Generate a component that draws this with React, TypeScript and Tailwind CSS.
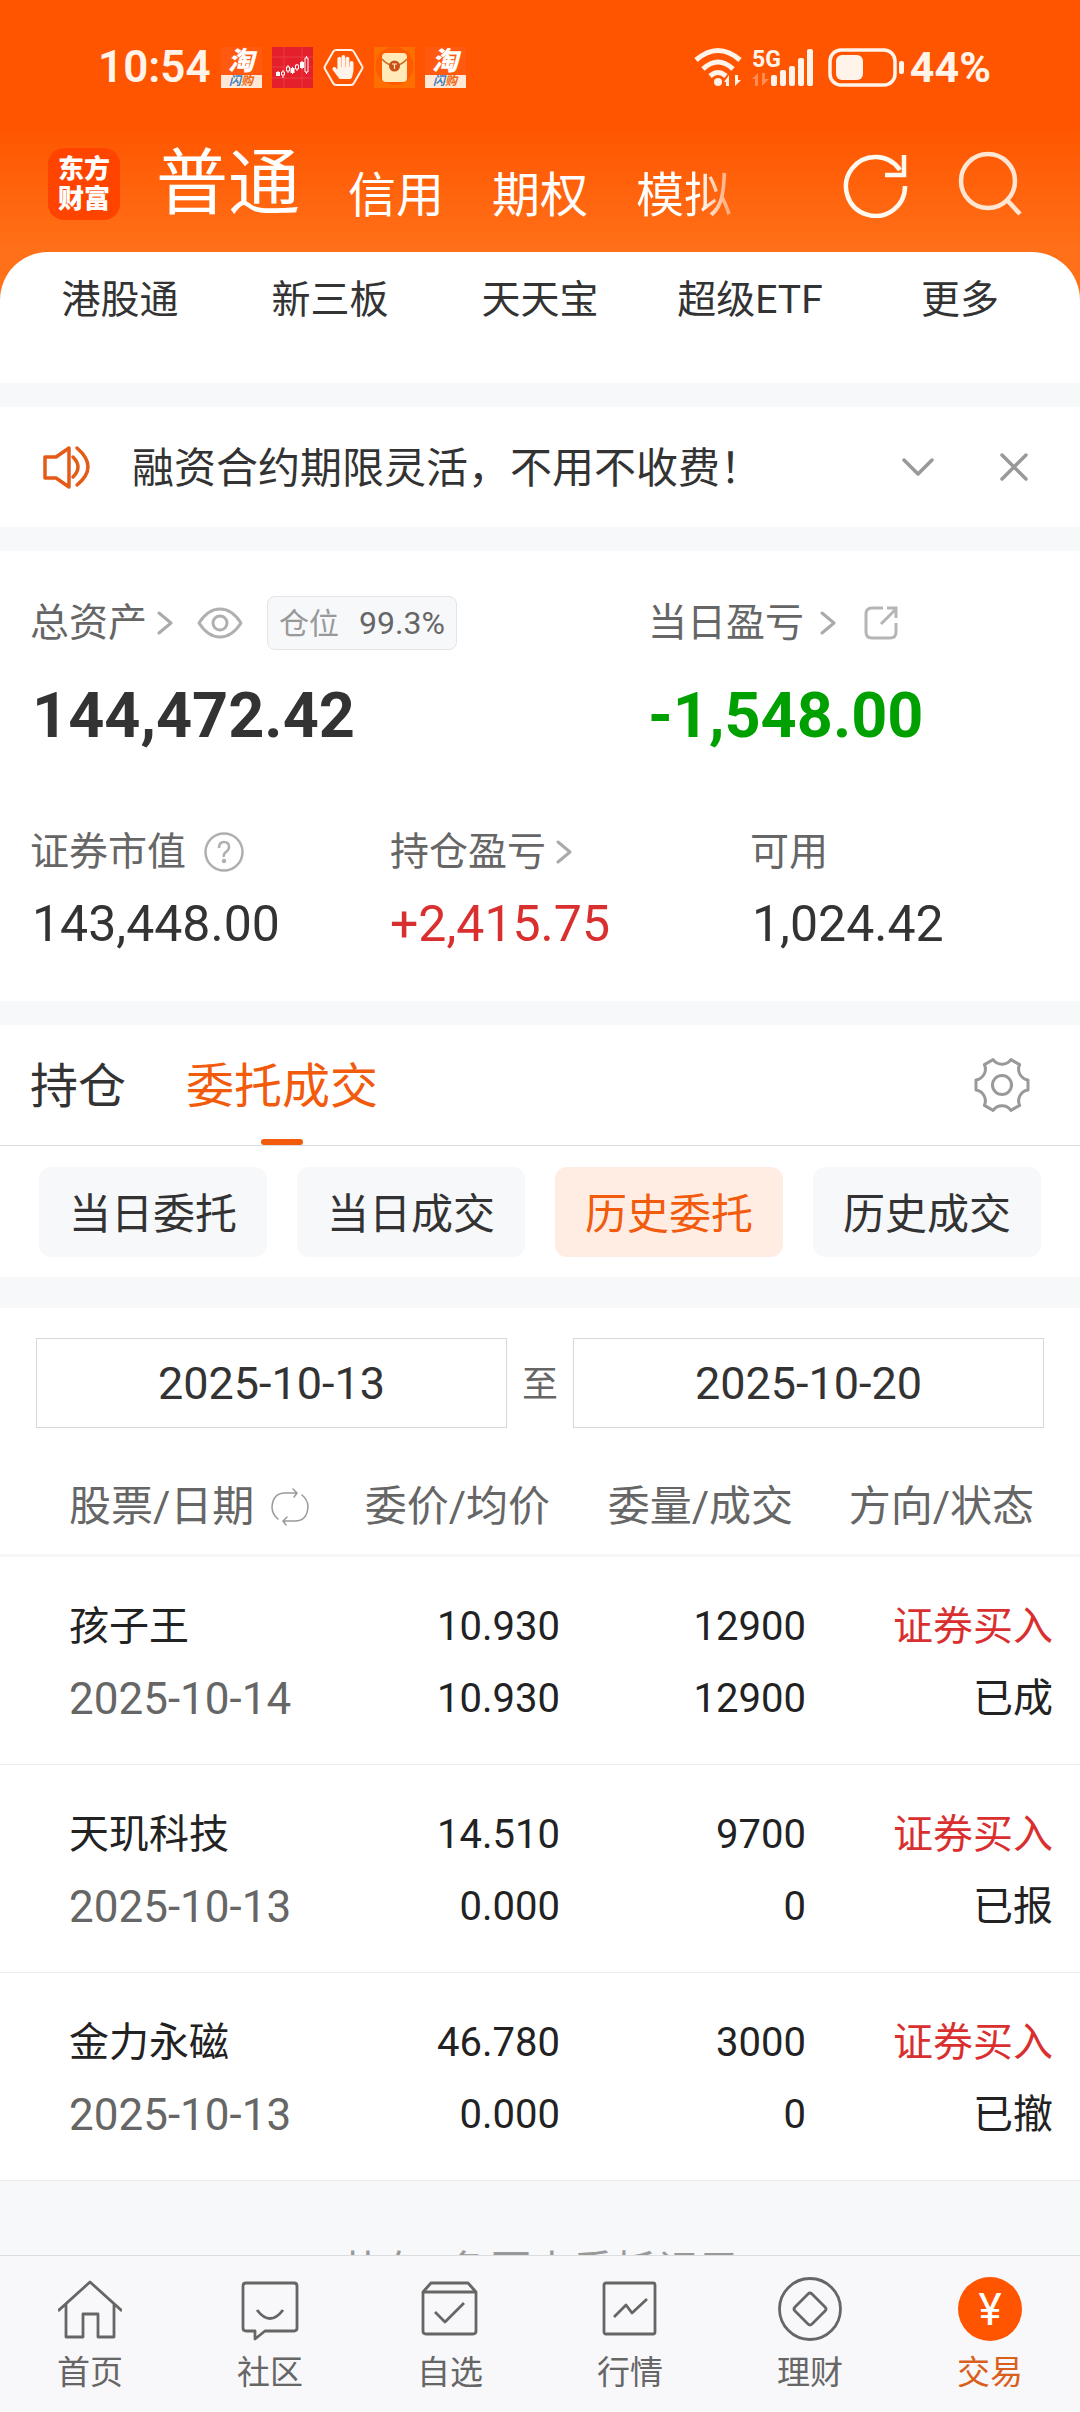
import { useState } from "react";
import { FaHandPaper } from "react-icons/fa";

type Order = {
  name: string;
  date: string;
  price: string;
  avgPrice: string;
  amount: string;
  dealt: string;
  side: string;
  status: string;
};

const orders: Order[] = [
  { name: "孩子王", date: "2025-10-14", price: "10.930", avgPrice: "10.930", amount: "12900", dealt: "12900", side: "证券买入", status: "已成" },
  { name: "天玑科技", date: "2025-10-13", price: "14.510", avgPrice: "0.000", amount: "9700", dealt: "0", side: "证券买入", status: "已报" },
  { name: "金力永磁", date: "2025-10-13", price: "46.780", avgPrice: "0.000", amount: "3000", dealt: "0", side: "证券买入", status: "已撤" },
];

const shortcuts = ["港股通", "新三板", "天天宝", "超级ETF", "更多"];
const filters = ["当日委托", "当日成交", "历史委托", "历史成交"];

function ChevronRight() {
  return (
    <svg className="h-6 w-4" viewBox="0 0 16 24" fill="none" stroke="#aaa" strokeWidth="3" strokeLinecap="round" strokeLinejoin="round">
      <path d="M2 2l12 10L2 22" />
    </svg>
  );
}

function TaobaoIcon() {
  return (
    <div className="flex h-[41px] w-[41px] flex-col overflow-hidden bg-[#ff5a10] text-center">
      <span className="h-[28px] text-[26px] leading-[28px] font-black text-white italic">淘</span>
      <span className="h-[13px] bg-[#ffe9d6] text-[12px] leading-[12px] font-bold text-[#f0650f] italic">
        <span className="text-[#3c7fc4]">闪</span>购
      </span>
    </div>
  );
}

function StatusBar() {
  return (
    <div className="flex items-center justify-between pt-[46px] pr-[89px] pl-[98px] text-[#fff3ea]">
      <div className="flex h-[42px] items-center gap-[10px]">
        <span className="text-[44px] leading-[42px] font-semibold">10:54</span>
        <TaobaoIcon />
        <svg className="h-[41px] w-[41px]" viewBox="0 0 41 41">
          <rect width="41" height="41" fill="#e4202c" />
          <path d="M0 10h41M0 20h41M0 31h41M12 0v41M30 0v41" stroke="#ea3b42" strokeWidth="1" />
          <path d="M6 24v5M11 23v8M16 18v8M20.500 20v7M25 17v7M30 14v8M34.500 9v18" stroke="#fff" strokeWidth="1" />
          <path d="M4 25h4v4H4zM18.500 21h4v5h-4zM28 15h4v6h-4z" fill="#fff" />
          <path d="M9.500 25h3v3h-3zM14.500 20h3v4h-3zM23.500 18h3v4h-3zM33 11h3v14h-3z" fill="#e4202c" stroke="#fff" strokeWidth="1" />
        </svg>
        <div className="relative flex h-[41px] w-[41px] items-center justify-center">
          <svg className="absolute inset-0" viewBox="0 0 41 41" fill="none" stroke="currentColor" strokeWidth="2" strokeLinejoin="round">
            <path d="M13 3h15q2 0 3 2l8 14q1 1.500 0 3l-8 14q-1 2-3 2H13q-2 0-3-2L2 22q-1-1.500 0-3l8-14q1-2 3-2z" />
          </svg>
          <FaHandPaper className="h-6 w-6" />
        </div>
        <svg className="h-[41px] w-[41px]" viewBox="0 0 41 41">
          <rect width="41" height="41" fill="#ff6f00" />
          <circle cx="20.500" cy="19" r="19" fill="#ff5a00" />
          <rect x="8" y="6" width="25" height="29" rx="4" fill="#ffeab8" />
          <path d="M8 12q5 6 12.500 7Q28 18 33 12" fill="none" stroke="#c8691d" strokeWidth="1.500" />
          <circle cx="20.500" cy="19" r="5.500" fill="#c8501a" />
          <path d="M18 17h5M20.500 17v5" stroke="#ffeab8" strokeWidth="1.200" />
        </svg>
        <TaobaoIcon />
      </div>

      <div className="flex h-[42px] items-center">
        <svg className="h-[40px] w-[48px]" viewBox="0 0 48 40" fill="none" stroke="currentColor" strokeWidth="5">
          <path d="M2 13Q24-6 46 13M9 22Q24 8 39 22M16 29Q24 22 32 29" />
          <circle cx="24" cy="35" r="4" fill="currentColor" stroke="none" />
          <path d="M35 28v11h-3v-4h-2zM41 28v11l6-6h-3v-5z" fill="currentColor" stroke="none" />
        </svg>
        <svg className="ml-[10px] h-[40px] w-[64px]" viewBox="0 0 64 40" fill="currentColor">
          <text x="0" y="20" fontSize="23" fontWeight="700">5G</text>
          <path d="M6 26v13H3v-7H0zM10 26v13l7-7h-4v-6z" opacity=".35" />
          <rect x="19" y="28" width="6" height="11" rx="2" />
          <rect x="28" y="23" width="6" height="16" rx="2" />
          <rect x="37" y="19" width="6" height="20" rx="2" />
          <rect x="46" y="11" width="6" height="28" rx="2" />
          <rect x="55" y="2" width="6" height="37" rx="2" />
        </svg>
        <svg className="ml-[12px] h-[40px] w-[78px]" viewBox="0 0 78 40" fill="none">
          <rect x="2" y="3" width="65" height="35" rx="11" stroke="currentColor" strokeWidth="3.500" />
          <rect x="8" y="8" width="27" height="25" rx="6" fill="currentColor" />
          <rect x="71" y="14" width="5" height="13" rx="2" fill="currentColor" />
        </svg>
        <span className="ml-1 text-[43px] leading-[42px] font-bold">44%</span>
      </div>
    </div>
  );
}

function TitleBar() {
  return (
    <div className="flex items-center pt-10 pr-14 pb-3 pl-12 text-white">
      <div className="flex h-[72px] w-[72px] flex-col items-center justify-center rounded-2xl bg-[#ff4400] text-[26px] leading-[30px] font-black">
        <span>东方</span>
        <span>财富</span>
      </div>
      <nav className="ml-9 flex h-28 items-center gap-12 text-[48px] leading-[64px]">
        <button className="text-[72px]">普通</button>
        <button className="pt-6">信用</button>
        <button className="pt-6">期权</button>
        <button className="bg-linear-to-r from-white from-65% to-white/40 bg-clip-text pt-6 text-transparent">模拟</button>
      </nav>
      <button aria-label="刷新" className="ml-auto">
        <svg className="h-[68px] w-[68px]" viewBox="0 0 68 68" fill="none" stroke="#fffaf0" strokeWidth="4.500">
          <path d="M63 36A29.500 29.500 0 1 1 58 20" />
          <path d="M62 5v20H43" />
        </svg>
      </button>
      <button aria-label="搜索" className="ml-[46px]">
        <svg className="h-[68px] w-[68px]" viewBox="0 0 68 68" fill="none" stroke="#ffe6d2" strokeWidth="4.500">
          <circle cx="32" cy="31" r="27" />
          <path d="M51 50l13 14" />
        </svg>
      </button>
    </div>
  );
}

function Notice() {
  return (
    <section className="mt-6 flex h-[120px] items-center bg-white pr-[52px] pl-[42px]">
      <svg className="h-11 w-12" viewBox="0 0 48 44" fill="none" stroke="#e35b17" strokeWidth="3.500" strokeLinecap="round" strokeLinejoin="round">
        <path d="M3 12h11L27 3v39L14 33H3zM31 12q10 10 0 20M35 3q22 19 0 37" />
      </svg>
      <p className="ml-[42px] pt-1 text-[42px] leading-[60px]">融资合约期限灵活，不用不收费！</p>
      <button aria-label="展开" className="ml-auto">
        <svg className="h-5 w-8" viewBox="0 0 32 20" fill="none" stroke="#999" strokeWidth="3.500" strokeLinecap="round" strokeLinejoin="round">
          <path d="M2 3l14 14L30 3" />
        </svg>
      </button>
      <button aria-label="关闭" className="ml-[66px]">
        <svg className="h-7 w-7" viewBox="0 0 28 28" fill="none" stroke="#999" strokeWidth="3.500" strokeLinecap="round">
          <path d="M2 2l24 24M26 2L2 26" />
        </svg>
      </button>
    </section>
  );
}

function Assets() {
  return (
    <section className="mt-6 bg-white pt-[45px] pb-[50px]">
      <div className="grid grid-cols-5">
        <div className="col-span-3 pl-[30px]">
          <div className="flex h-[54px] items-center text-[39px] text-[#666]">
            <span className="mr-[10px]">总资产</span>
            <ChevronRight />
            <svg className="ml-6 h-8 w-[46px]" viewBox="0 0 46 32" fill="none" stroke="#b0b0b0" strokeWidth="3">
              <path d="M2 16Q11 2 23 2t21 14Q35 30 23 30T2 16z" strokeLinejoin="round" />
              <circle cx="23" cy="16" r="7" />
            </svg>
            <div className="ml-6 flex h-[54px] items-center gap-5 rounded-lg border border-[#e4e5e8] bg-[#f7f8fa] px-[11px] text-[30px]">
              <span className="text-[#999]">仓位</span>
              <span className="text-[32px]">99.3%</span>
            </div>
          </div>
          <p className="mt-[30px] pl-[2px] text-[63px] leading-[72px] font-bold">144,472.42</p>
        </div>
        <div className="col-span-2">
          <div className="flex h-[54px] items-center text-[39px] text-[#666]">
            <span className="mr-4">当日盈亏</span>
            <ChevronRight />
            <svg className="ml-7 h-[34px] w-[34px]" viewBox="0 0 34 34" fill="none" stroke="#b5b5b5" strokeWidth="3">
              <path d="M19 2H8Q2 2 2 8v18q0 6 6 6h18q6 0 6-6V17M17 18L32 3M23 2h9v10" />
            </svg>
          </div>
          <p className="mt-[30px] text-[63px] leading-[72px] font-bold text-[#00a000]">-1,548.00</p>
        </div>
      </div>

      <div className="mt-[73px] grid grid-cols-3 text-[50px]">
        <div className="pl-[30px]">
          <div className="flex h-[54px] items-center text-[39px] text-[#666]">
            <span>证券市值</span>
            <svg className="ml-[18px] h-10 w-10" viewBox="0 0 40 40" fill="none" stroke="#b0b0b0" strokeWidth="2.500">
              <circle cx="20" cy="20" r="18.500" />
              <path d="M15 16q0-6 5-6t5 5q0 3-3 5t-2 5" />
              <circle cx="20" cy="29" r="1" fill="#b0b0b0" />
            </svg>
          </div>
          <p className="mt-[18px] pl-[2px] leading-[54px]">143,448.00</p>
        </div>
        <div className="pl-[30px]">
          <div className="flex h-[54px] items-center text-[39px] text-[#666]">
            <span className="mr-[10px]">持仓盈亏</span>
            <ChevronRight />
          </div>
          <p className="mt-[18px] leading-[54px] text-[#d9302f]">+2,415.75</p>
        </div>
        <div className="pl-[30px]">
          <div className="flex h-[54px] items-center text-[39px] text-[#666]">可用</div>
          <p className="mt-[18px] pl-[2px] leading-[54px]">1,024.42</p>
        </div>
      </div>
    </section>
  );
}

function OrderTabs() {
  const [filter, setFilter] = useState("历史委托");

  return (
    <section className="mt-6 bg-white">
      <div className="flex h-[121px] items-stretch border-b border-[#dcdddf] pr-12 pl-[30px] text-[48px]">
        <button className="pt-1">持仓</button>
        <button className="relative ml-[60px] pt-1 text-[#f25a0c]">
          委托成交
          <span className="absolute bottom-0 left-1/2 h-[6px] w-[42px] -translate-x-1/2 rounded-full bg-[#f25a0c]" />
        </button>
        <button aria-label="设置" className="ml-auto">
          <svg className="h-[60px] w-[60px]" viewBox="-30 -30 60 60" fill="none" stroke="#999" strokeWidth="3" strokeLinejoin="round">
            <path d="M-8.900-25.400A11 11 0 0 0 8.900-25.400L17.600-20.400A11 11 0 0 0 26-5V5A11 11 0 0 0 17.600 20.400L8.900 25.400A11 11 0 0 0-8.900 25.400L-17.600 20.400A11 11 0 0 0-26 5V-5A11 11 0 0 0-17.600-20.400Z" />
            <circle r="9.500" />
          </svg>
        </button>
      </div>
      <div className="grid grid-cols-4 gap-[30px] px-[39px] pt-[21px] pb-5 text-[42px]">
        {filters.map((item) => (
          <button
            key={item}
            onClick={() => setFilter(item)}
            className={`h-[90px] rounded-xl pt-1 ${
              item === filter ? "bg-[#ffede4] text-[#f25a0c]" : "bg-[#f7f8fa]"
            }`}
          >
            {item}
          </button>
        ))}
      </div>
    </section>
  );
}

function OrderHistory() {
  return (
    <section className="mt-[31px] bg-white">
      <div className="flex items-center px-9 pt-[30px] text-[45px]">
        <input
          aria-label="开始日期"
          defaultValue="2025-10-13"
          className="h-[90px] min-w-0 flex-1 border border-[#d6d8da] text-center outline-none"
        />
        <span className="w-[66px] pt-1 text-center text-[36px] text-[#666]">至</span>
        <input
          aria-label="结束日期"
          defaultValue="2025-10-20"
          className="h-[90px] min-w-0 flex-1 border border-[#d6d8da] text-center outline-none"
        />
      </div>

      <table className="mt-8 w-full table-fixed text-right text-[40px] leading-[72px] text-[#222]">
        <thead className="border-b-[3px] border-[#f5f6f8] text-[42px] leading-[94px] text-[#666]">
          <tr>
            <th className="pl-[69px] text-left font-normal">
              <div className="flex items-center">
                股票/日期
                <svg className="ml-4 h-10 w-10" viewBox="0 0 40 40" fill="none" stroke="#999" strokeWidth="1.500" strokeLinecap="round" strokeLinejoin="round">
                  <path d="M8 32Q2 27 2 20 3 6 15 6h12M23 2l4 4-3 4M32 8q6 5 6 12-1 14-13 14H13M17 30l-4 4 3 4" />
                </svg>
              </div>
            </th>
            <th className="w-[246px] pr-[10px] font-normal">委价/均价</th>
            <th className="w-[246px] pr-[13px] font-normal">委量/成交</th>
            <th className="w-[274px] pr-[46px] font-normal">方向/状态</th>
          </tr>
        </thead>
        <tbody>
          {orders.map((order) => (
            <tr key={order.name} className="border-b border-[#ebecee]">
              <td className="pt-[34px] pb-[29px] pl-[69px] text-left">
                <p>{order.name}</p>
                <p className="text-[44px] text-[#666]">{order.date}</p>
              </td>
              <td className="pt-[34px] pb-[29px]">
                <p>{order.price}</p>
                <p>{order.avgPrice}</p>
              </td>
              <td className="pt-[34px] pb-[29px]">
                <p>{order.amount}</p>
                <p>{order.dealt}</p>
              </td>
              <td className="pt-[34px] pr-[27px] pb-[29px]">
                <p className="text-[#d9302f]">{order.side}</p>
                <p>{order.status}</p>
              </td>
            </tr>
          ))}
        </tbody>
      </table>
    </section>
  );
}

function BottomNav() {
  return (
    <nav className="fixed inset-x-0 bottom-0 grid h-[157px] grid-cols-6 border-t border-[#dcdddf] bg-[#f8f8fa] pt-[21px] text-[33px] leading-[64px] text-[#666]">
      <button className="flex flex-col items-center">
        <svg className="h-16 w-16" viewBox="0 0 64 64" fill="none" stroke="currentColor" strokeWidth="2.800" strokeLinejoin="round">
          <path d="M0 34L32 5l32 29M8 27v33h17V37h15v23h16V27" />
        </svg>
        首页
      </button>
      <button className="flex flex-col items-center">
        <svg className="h-16 w-16" viewBox="0 0 64 64" fill="none" stroke="currentColor" strokeWidth="2.800" strokeLinejoin="round">
          <path d="M8 6h48q3 0 3 3v42q0 3-3 3H27l-10 8v-8H8q-3 0-3-3V9q0-3 3-3z" />
          <path d="M19 33q13 17 26 0" />
        </svg>
        社区
      </button>
      <button className="flex flex-col items-center">
        <svg className="h-16 w-16" viewBox="0 0 64 64" fill="none" stroke="currentColor" strokeWidth="2.800" strokeLinejoin="round">
          <path d="M5 15l8-9h37l8 9v39q0 3-3 3H8q-3 0-3-3zM5 15h53M17 35l10 10 19-19" />
        </svg>
        自选
      </button>
      <button className="flex flex-col items-center">
        <svg className="h-16 w-16" viewBox="0 0 64 64" fill="none" stroke="currentColor" strokeWidth="2.800">
          <rect x="6" y="6" width="51" height="51" rx="2" />
          <path d="M16 40l12-12 6 8 15-14" strokeLinejoin="round" />
        </svg>
        行情
      </button>
      <button className="flex flex-col items-center">
        <svg className="h-16 w-16" viewBox="0 0 64 64" fill="none" stroke="currentColor" strokeWidth="2.800" strokeLinejoin="round">
          <circle cx="32" cy="32" r="30.500" />
          <path d="M30 17q2-2 4 0l13 13q2 2 0 4L34 47q-2 2-4 0L17 34q-2-2 0-4z" />
        </svg>
        理财
      </button>
      <button className="flex flex-col items-center text-[#d9601c]">
        <span className="h-16 w-16 rounded-full bg-[#ff5500] text-[44px] leading-[66px] text-white">¥</span>
        交易
      </button>
    </nav>
  );
}

export default function App() {
  return (
    <div className="min-h-screen bg-[#f7f8fa] font-['Roboto','Noto_Sans_CJK_SC',sans-serif] text-[#333]">
      <header className="bg-[linear-gradient(#ff5500_125px,#ff7018_250px)]">
        <StatusBar />
        <TitleBar />
        <div className="grid h-[131px] grid-cols-5 rounded-t-[48px] bg-white px-[15px] pt-[18px] text-[39px] leading-[60px]">
          {shortcuts.map((item) => (
            <a key={item} href="#" className="text-center">
              {item}
            </a>
          ))}
        </div>
      </header>
      <Notice />
      <Assets />
      <OrderTabs />
      <OrderHistory />
      <p className="pt-[61px] text-center text-[42px] leading-[60px] text-[#999]">共有3条历史委托记录</p>
      <BottomNav />
    </div>
  );
}
